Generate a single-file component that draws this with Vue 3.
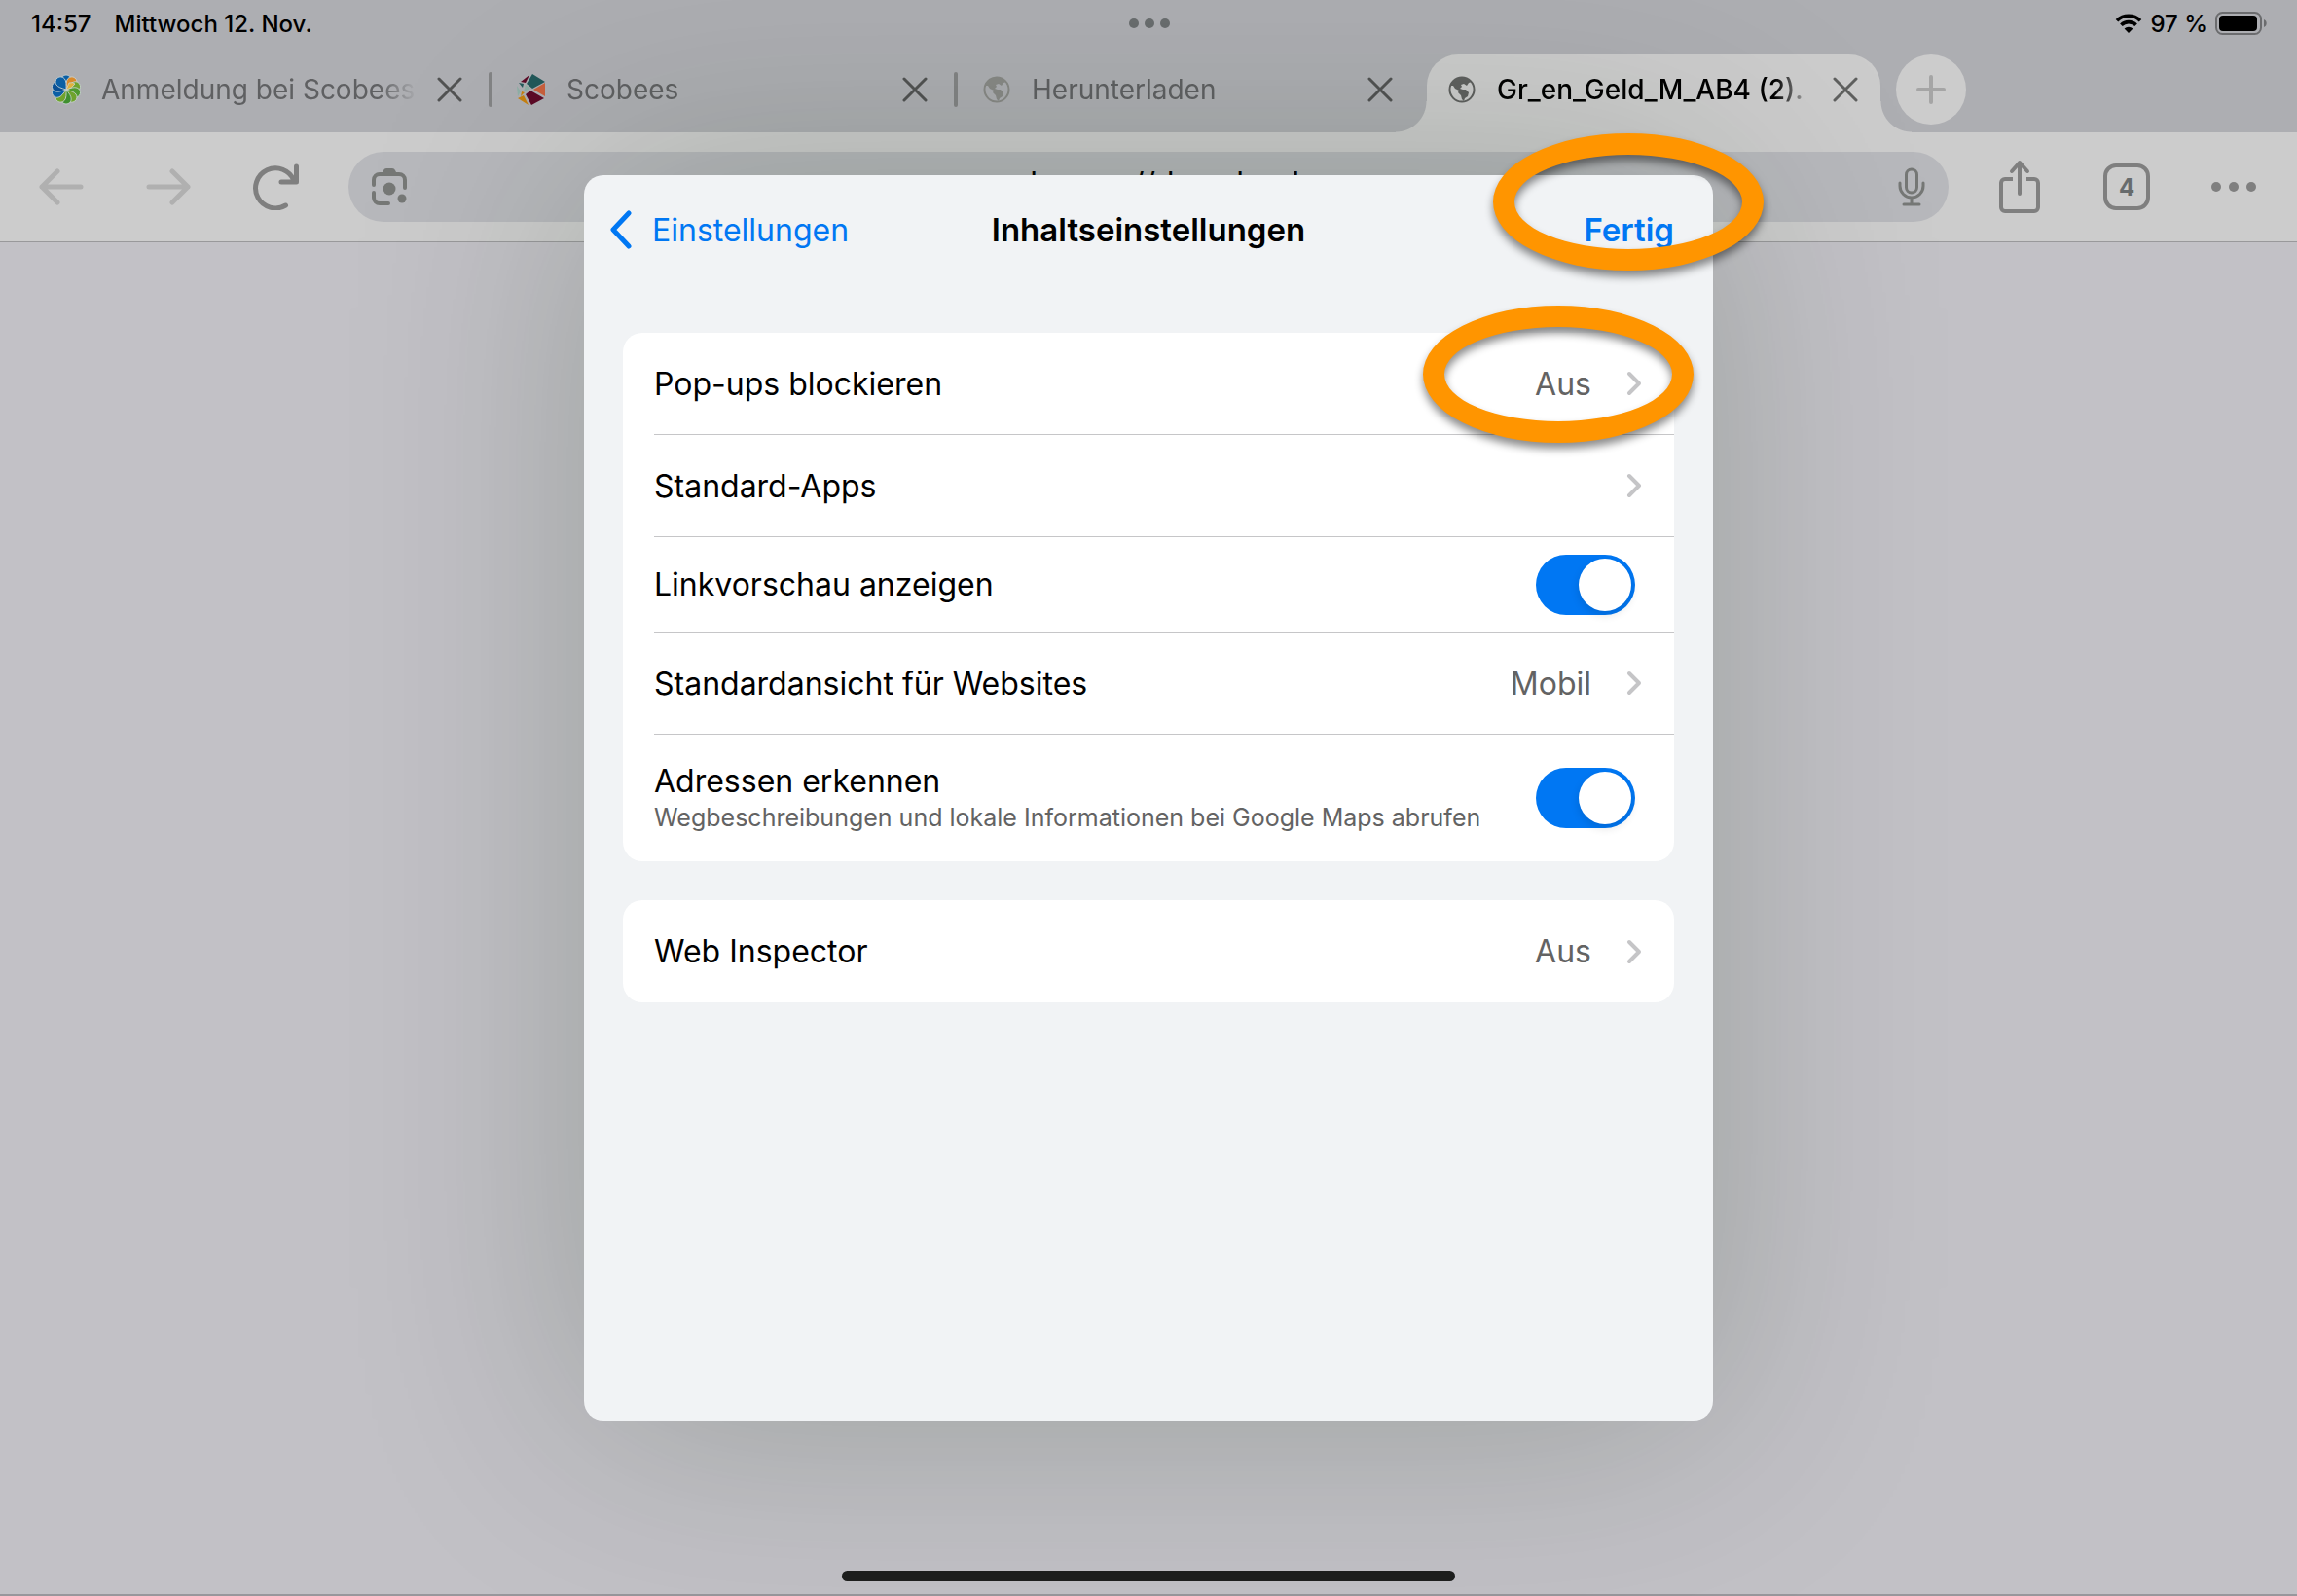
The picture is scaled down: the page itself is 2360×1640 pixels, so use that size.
<script setup>
import { ref } from 'vue'

const tabs = [
  { id: 1, title: 'Anmeldung bei Scobees', icon: 'flower' },
  { id: 2, title: 'Scobees', icon: 'hexagon' },
  { id: 3, title: 'Herunterladen', icon: 'globe' },
  { id: 4, title: 'Gr_en_Geld_M_AB4 (2).', icon: 'globe' },
]
const activeTab = ref(4)
const url = ref('chrome://downloads')

const groups = ref([
  [
    { id: 'popups', label: 'Pop-ups blockieren', value: 'Aus' },
    { id: 'apps', label: 'Standard-Apps', value: '' },
    { id: 'preview', label: 'Linkvorschau anzeigen', toggle: true, on: true },
    { id: 'view', label: 'Standardansicht für Websites', value: 'Mobil' },
    {
      id: 'addresses',
      label: 'Adressen erkennen',
      hint: 'Wegbeschreibungen und lokale Informationen bei Google Maps abrufen',
      toggle: true,
      on: true,
    },
  ],
  [{ id: 'inspector', label: 'Web Inspector', value: 'Aus' }],
])

// Clockwise from the top petal
const petals = ['#0b5fa5', '#d98a2b', '#6fa32c', '#4f9a2e', '#6fa32c', '#3f8f2f', '#6fa32c', '#0b5fa5', '#0a4f93', '#0b5fa5']
</script>

<template>
  <div class="screen">
    <header class="status">
      <div class="clock"><span>14:57</span><span>Mittwoch 12. Nov.</span></div>
      <svg class="multitask" width="44" height="10" viewBox="0 0 44 10">
        <circle cx="6" cy="5" r="5" /><circle cx="22" cy="5" r="5" /><circle cx="38" cy="5" r="5" />
      </svg>
      <div class="power">
        <svg width="28" height="20" viewBox="0 0 28 20">
          <path d="M2 7.2a17 17 0 0 1 24 0M6.4 11.8a10.6 10.6 0 0 1 15.2 0" fill="none" stroke="#000" stroke-width="3.6" />
          <path d="M14 20l-4.4-4.4a6.2 6.2 0 0 1 8.8 0z" />
        </svg>
        <span>97 %</span>
        <svg width="54" height="24" viewBox="0 0 54 24">
          <rect x="1" y="1" width="46" height="22" rx="6.5" fill="none" stroke="#6b6c6e" stroke-width="2" />
          <rect x="4" y="4" width="39" height="16" rx="4" />
          <path d="M50 8c3.6 1.2 3.6 6.8 0 8z" fill="#6b6c6e" />
        </svg>
      </div>
    </header>

    <nav class="tabs">
      <div v-for="tab in tabs" :key="tab.id" class="tab" :class="{ active: tab.id === activeTab }" @click="activeTab = tab.id">
        <svg v-if="tab.icon === 'flower'" class="favicon" viewBox="0 0 30 32">
          <g stroke="#c9d3d3" stroke-width="0.8">
            <path
              v-for="(color, i) in petals"
              :key="i"
              d="M15 16C12 12 9.6 9 9.8 6A5.2 5 0 0 1 20.2 6C20.4 9 18 12 15 16z"
              :fill="color"
              :transform="`rotate(${i * 36} 15 16)`"
            />
            <path d="M15 16L18 9Q22 8 24 10Q21 15 15 16z" fill="#e0b23c" />
          </g>
        </svg>
        <svg v-else-if="tab.icon === 'hexagon'" class="favicon" viewBox="0 0 30 32">
          <path d="M16 0L29 8L16 15L10 10z" fill="#22595a" />
          <path d="M29 9V23L17 16z" fill="#c9603c" />
          <path d="M14 17L28 25L15 32L9 21z" fill="#5c0a26" />
          <path d="M7 22L12 32L1 25z" fill="#c8810f" />
          <path d="M5 18L8 19L4 23z" fill="#c8810f" />
          <path d="M13 1L9 9L4 8z" fill="#5c0a26" />
          <path d="M2 9L7 10L6 14z" fill="#22595a" />
          <path d="M9 11L14 15L7 18zM0 12L4 18L1 23z" fill="#8fb0a6" />
        </svg>
        <svg v-else class="favicon globe" viewBox="0 0 30 32">
          <circle cx="15" cy="16" r="12.5" fill="none" stroke="currentColor" stroke-width="2" />
          <path
            d="M3 12C5 5 13 1 21 5L25 8L22 9L20 12L17 10L14 11L15 13L13 15L16 16L19 16L22 19L21 23L18 25L17 28L15 26L14 22L11 19L12 17L8 15L6 12z"
            fill="currentColor"
          />
        </svg>
        <span class="title">{{ tab.title }}</span>
        <button class="close" aria-label="Tab schließen">
          <svg width="26" height="28" viewBox="0 0 26 28">
            <path d="M2 3L24 25M24 3L2 25" fill="none" stroke="currentColor" stroke-width="3" stroke-linecap="round" />
          </svg>
        </button>
      </div>
      <button class="new-tab" aria-label="Neuer Tab">
        <svg width="30" height="30" viewBox="0 0 30 30">
          <path d="M15 2V28M2 15H28" stroke="#a5a5a5" stroke-width="4" stroke-linecap="round" />
        </svg>
      </button>
    </nav>

    <div class="toolbar">
      <button class="tool faded" aria-label="Zurück">
        <svg width="46" height="40" viewBox="0 0 46 40">
          <path d="M19 4L3 20L19 36M3 20H43" />
        </svg>
      </button>
      <button class="tool faded" aria-label="Vorwärts">
        <svg width="46" height="40" viewBox="0 0 46 40">
          <path d="M27 4L43 20L27 36M43 20H3" />
        </svg>
      </button>
      <button class="tool" aria-label="Neu laden">
        <svg width="48" height="48" viewBox="0 0 48 48">
          <path d="M34.5 43A20.5 20.5 0 1 1 43 17.5M45.5 3V19H30" stroke-width="5" />
        </svg>
      </button>
      <div class="omnibox">
        <svg width="36" height="40" viewBox="0 0 36 40">
          <path d="M2 18V13a6 6 0 0 1 6-6H28a6 6 0 0 1 6 6V21M2 26V31a6 6 0 0 0 6 6H17" fill="none" stroke="#767876" stroke-width="4" stroke-linecap="round" />
          <path d="M10 7L12 3Q13 1 15 1H21Q23 1 24 3L26 7z" fill="#767876" />
          <circle cx="18" cy="22" r="6.5" fill="#767876" /><circle cx="31" cy="32" r="4.5" fill="#767876" />
        </svg>
        <input v-model="url" type="text" aria-label="Adresse" />
        <svg width="28" height="40" viewBox="0 0 28 40" fill="none" stroke="#767876" stroke-width="3" stroke-linecap="round">
          <rect x="8.5" y="2" width="11" height="24" rx="5.5" />
          <path d="M2 16V19a12 12 0 0 0 24 0V16M14 31V38M6 38H22" />
        </svg>
      </div>
      <button class="tool" aria-label="Teilen">
        <svg width="44" height="56" viewBox="0 0 44 56">
          <path stroke-linecap="butt" d="M15 20H7a4 4 0 0 0-4 4V49a4 4 0 0 0 4 4H37a4 4 0 0 0 4-4V24a4 4 0 0 0-4-4H29" />
          <path d="M22 35V4M14 12L22 3L30 12" />
        </svg>
      </button>
      <button class="tool" aria-label="Tabs anzeigen"><span class="count">4</span></button>
      <button class="tool" aria-label="Menü">
        <svg class="dots" width="46" height="10" viewBox="0 0 46 10">
          <circle cx="5" cy="5" r="5" /><circle cx="23" cy="5" r="5" /><circle cx="41" cy="5" r="5" />
        </svg>
      </button>
    </div>

    <main class="page"></main>

    <div class="backdrop">
      <section class="sheet" role="dialog" aria-labelledby="sheet-title">
        <div class="sheet-head">
          <button class="link back">
            <svg width="26" height="40" viewBox="0 0 26 40">
              <path d="M22 3L6 20L22 37" fill="none" stroke="currentColor" stroke-width="5" stroke-linecap="round" stroke-linejoin="round" />
            </svg>
            Einstellungen
          </button>
          <h1 id="sheet-title">Inhaltseinstellungen</h1>
          <button class="link done">Fertig</button>
        </div>

        <ul v-for="(group, g) in groups" :key="g" class="card">
          <li v-for="row in group" :key="row.id" class="row" :class="{ switchable: row.toggle, tall: row.hint }">
            <template v-if="row.toggle">
              <label :for="row.id">
                {{ row.label }}
                <small v-if="row.hint">{{ row.hint }}</small>
              </label>
              <input :id="row.id" v-model="row.on" type="checkbox" role="switch" class="switch" />
            </template>
            <button v-else class="nav">
              <span class="name">{{ row.label }}</span>
              <span class="value">{{ row.value }}</span>
              <svg width="18" height="28" viewBox="0 0 18 28">
                <path d="M3 4L13 14L3 24" fill="none" stroke="#c5c5c7" stroke-width="4" stroke-linecap="round" stroke-linejoin="round" />
              </svg>
            </button>
          </li>
        </ul>

        <!-- Hand-drawn markers over the two controls to tap -->
        <div class="marker marker-done"></div>
        <div class="marker marker-popups"></div>
      </section>
    </div>

    <div class="home-indicator"></div>
  </div>
</template>

<style>
body {
  background: #c2c1c6;
}
</style>

<style scoped>
.screen {
  position: relative;
  display: flex;
  flex-direction: column;
  min-height: 100vh;
  overflow: hidden;
  background: #c2c1c6;
  color: #000;
  font-family: Inter, "Liberation Sans", sans-serif;
}

button {
  margin: 0;
  padding: 0;
  border: 0;
  background: none;
  color: inherit;
  font: inherit;
  cursor: pointer;
}

svg {
  display: block;
  flex: none;
}

.status {
  display: grid;
  grid-template-columns: 1fr auto 1fr;
  align-items: center;
  height: 48px;
  padding: 0 30px 0 32px;
  background: #adaeb2;
  font-size: 24px;
  font-weight: 500;
}

.clock {
  display: flex;
  gap: 24px;
}

.multitask {
  fill: #696d6e;
}

.power {
  display: flex;
  align-items: center;
  justify-content: flex-end;
  gap: 8px;
}

.tabs {
  display: flex;
  align-items: flex-end;
  height: 88px;
  padding-left: 26px;
  background: #adaeb2;
}

.tab {
  position: relative;
  display: flex;
  align-items: center;
  flex: 0 1 478px;
  min-width: 0;
  box-sizing: border-box;
  height: 80px;
  padding: 0 29px 8px 27px;
  color: #5f6062;
  font-size: 28px;
}

.tab::after {
  content: "";
  position: absolute;
  right: -2px;
  top: 18px;
  width: 4px;
  height: 36px;
  border-radius: 2px;
  background: #838485;
}

.tab:nth-child(3)::after {
  display: none;
}

.favicon {
  width: 30px;
  height: 32px;
  margin-right: 21px;
}

.globe {
  color: #888986;
}

.title {
  flex: 1;
  min-width: 0;
  overflow: hidden;
  white-space: nowrap;
  mask-image: linear-gradient(to right, #000 calc(100% - 40px), transparent);
}

.close {
  margin-left: 20px;
  color: #525353;
}

.tab.active {
  margin: 0 6px;
  flex-basis: 466px;
  padding: 0 23px 8px 21px;
  border-radius: 32px 32px 0 0;
  background: #cccccc;
  color: #000;
  font-weight: 500;
}

/* Flared feet where the active tab joins the toolbar */
.tab.active::before,
.tab.active::after {
  content: "";
  position: absolute;
  top: auto;
  bottom: 0;
  width: 32px;
  height: 32px;
  border-radius: 0;
}

.tab.active::before {
  left: -32px;
  background: radial-gradient(circle at 0 0, transparent 31px, #cccccc 32px);
}

.tab.active::after {
  right: -32px;
  background: radial-gradient(circle at 100% 0, transparent 31px, #cccccc 32px);
}

.tab.active .globe,
.tab.active .close {
  color: #5f605f;
}

.new-tab {
  display: grid;
  place-items: center;
  flex: none;
  width: 72px;
  height: 72px;
  margin: 0 0 8px 10px;
  border-radius: 50%;
  background: #cccccc;
}

.toolbar {
  display: flex;
  align-items: center;
  height: 112px;
  padding: 0 10px 0 8px;
  border-bottom: 1px solid #99999b;
  background: #cccccc;
}

.tool {
  display: grid;
  place-items: center;
  flex: none;
  width: 110px;
  height: 72px;
}

.tool svg {
  fill: none;
  stroke: #7f7f7f;
  stroke-width: 4;
  stroke-linecap: round;
  stroke-linejoin: round;
}

.tool.faded svg {
  stroke: #b0b0b0;
  stroke-width: 5;
}

.tool .dots {
  fill: #7f7f7f;
  stroke: none;
}

.omnibox {
  display: flex;
  align-items: center;
  flex: 1;
  min-width: 0;
  box-sizing: border-box;
  height: 72px;
  margin: 0 18px 0 20px;
  padding: 0 24px;
  border-radius: 36px;
  background: #b7b8bc;
}

.omnibox input {
  flex: 1;
  min-width: 0;
  padding: 0 0 8px 24px;
  border: 0;
  outline: 0;
  background: none;
  color: #000;
  font: 400 32px Inter, "Liberation Sans", sans-serif;
  text-align: center;
}

.count {
  display: grid;
  place-items: center;
  box-sizing: border-box;
  width: 48px;
  height: 48px;
  border: 4px solid #7f7f7f;
  border-radius: 13px;
  color: #676b6d;
  font-size: 24px;
  font-weight: 700;
}

.page {
  flex: 1;
  border-bottom: 2px solid #98979c;
}

.backdrop {
  position: absolute;
  inset: 0;
  display: grid;
  place-items: center;
}

.sheet {
  position: relative;
  box-sizing: border-box;
  width: min(1160px, 100%);
  min-height: min(1280px, 100vh);
  padding: 0 40px;
  border-radius: 20px;
  background: #f1f3f5;
  box-shadow: 0 0 240px rgba(0, 32, 0, 0.21);
  font-size: 32px;
}

.sheet-head {
  display: grid;
  grid-template-columns: 1fr auto 1fr;
  align-items: center;
  height: 112px;
  margin-bottom: 50px;
}

.link {
  color: #0077f3;
}

.back {
  display: flex;
  align-items: center;
  gap: 20px;
  justify-self: start;
  margin-left: -16px;
}

.done {
  justify-self: end;
  font-size: 33px;
  font-weight: 600;
}

h1 {
  margin: 0;
  font-size: 33px;
  font-weight: 600;
}

.card {
  margin: 0 0 40px;
  padding: 0 0 0 32px;
  border-radius: 20px;
  background: #fff;
  list-style: none;
}

.row {
  display: flex;
  align-items: center;
  box-sizing: border-box;
  height: 105px;
  border-bottom: 1px solid #c6c6c8;
}

.row:last-child {
  border-bottom: 0;
}

.row.switchable {
  height: 98px;
  padding-right: 40px;
}

.row.tall {
  height: 130px;
}

.nav {
  display: flex;
  align-items: center;
  width: 100%;
  height: 100%;
  padding-right: 31px;
  text-align: left;
}

.name,
label {
  flex: 1;
}

label {
  line-height: 40px;
}

small {
  display: block;
  color: #636363;
  font-size: 25px;
  line-height: 34px;
}

.value {
  margin-right: 36px;
  color: #636363;
}

.switch {
  appearance: none;
  flex: none;
  width: 102px;
  height: 62px;
  margin: 0;
  padding: 4px;
  border-radius: 31px;
  background: #d9d9dc;
  cursor: pointer;
}

.switch::before {
  content: "";
  display: block;
  width: 54px;
  height: 54px;
  border-radius: 50%;
  background: #fff;
  box-shadow: 0 4px 10px rgba(0, 0, 0, 0.12);
}

.switch:checked {
  background: #0077f3;
}

.switch:checked::before {
  margin-left: auto;
}

.marker {
  position: absolute;
  box-sizing: border-box;
  width: 278px;
  height: 141px;
  border: 22px solid #ff9500;
  border-radius: 50%;
  filter: drop-shadow(0 6px 4px rgba(0, 0, 0, 0.45));
  pointer-events: none;
}

.marker-done {
  top: -43px;
  right: -52px;
}

.marker-popups {
  top: 134px;
  right: 20px;
}

.home-indicator {
  position: absolute;
  left: 50%;
  bottom: 15px;
  width: 630px;
  height: 11px;
  margin-left: -315px;
  border-radius: 6px;
  background: #1d1e1d;
}
</style>
